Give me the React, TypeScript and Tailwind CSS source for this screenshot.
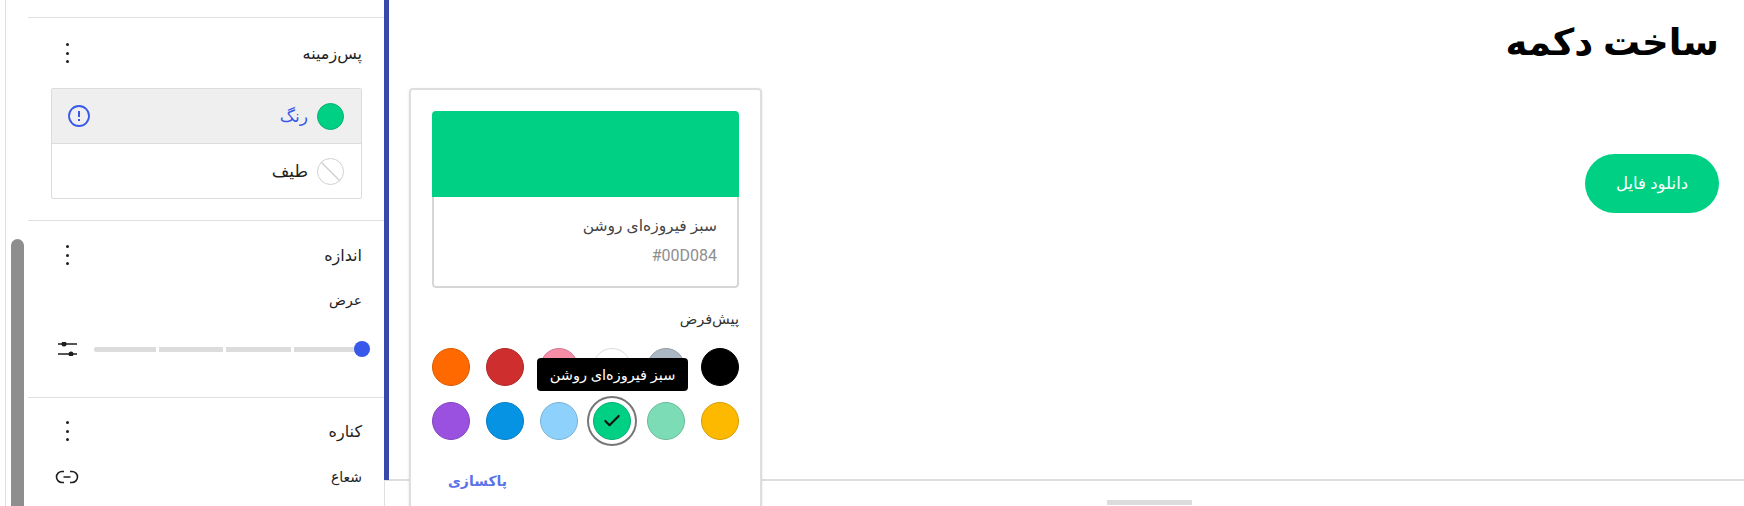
import { Check } from 'lucide-react';

const topColors = [
  { bg: 'bg-[#ff6900]', ring: 'border-[#d95a00]' },
  { bg: 'bg-[#cf2e2e]', ring: 'border-[#b02727]' },
  { bg: 'bg-[#f78da7]', ring: 'border-[#d2788e]' },
  { bg: 'bg-white', ring: 'border-[#dcdcdc]' },
  { bg: 'bg-[#abb8c3]', ring: 'border-[#919ca6]' },
  { bg: 'bg-black', ring: 'border-black' },
];

const bottomColors = [
  { bg: 'bg-[#9b51e0]', ring: 'border-[#8445be]' },
  { bg: 'bg-[#0693e3]', ring: 'border-[#057dc1]' },
  { bg: 'bg-[#8ed1fc]', ring: 'border-[#79b2d6]' },
  { bg: 'bg-[#00d084]', ring: 'border-[#00b170]', selected: true },
  { bg: 'bg-[#7bdcb5]', ring: 'border-[#69bb9a]' },
  { bg: 'bg-[#fcb900]', ring: 'border-[#d69d00]' },
];

function Kebab() {
  return (
    <div className="flex flex-col gap-[5.5px] w-[3px]">
      <span className="w-[3px] h-[3px] rounded-full bg-[#1e1e1e]"></span>
      <span className="w-[3px] h-[3px] rounded-full bg-[#1e1e1e]"></span>
      <span className="w-[3px] h-[3px] rounded-full bg-[#1e1e1e]"></span>
    </div>
  );
}

function SectionHeader({ title }: { title: string }) {
  return (
    <div className="flex items-center justify-between pl-[38px] pr-[22px] h-[24px]">
      <Kebab />
      <span className="text-[16px] leading-[24px] text-[#1e1e1e]" dir="rtl">{title}</span>
    </div>
  );
}

function Swatch({ bg, ring, selected }: { bg: string; ring: string; selected?: boolean }) {
  return (
    <div className="relative w-[38px] h-[38px]">
      <div className={`w-[38px] h-[38px] rounded-full border ${bg} ${ring} flex items-center justify-center`}>
        {selected && <Check size={20} strokeWidth={2.6} className="text-[#111]" />}
      </div>
      {selected && (
        <div className="absolute -inset-[6px] rounded-full border-[2.5px] border-[#777]"></div>
      )}
    </div>
  );
}

export default function App() {
  return (
    <div
      className="relative flex w-[1744px] h-[506px] overflow-hidden bg-white"
      style={{ fontFamily: '"Noto Sans", "Liberation Sans", "DejaVu Sans", sans-serif' }}
    >
      {/* scrollbar strip */}
      <div className="w-[28px] shrink-0 pl-[5px]">
        <div className="h-full border-l border-[#e0e0e0] pl-[5px] pt-[239px]">
          <div className="w-[13px] h-full bg-[#8e8e8e] rounded-t-[7px]"></div>
        </div>
      </div>

      {/* settings panel */}
      <div className="w-[357px] shrink-0 border-r border-[#e0e0e0] flex flex-col">
        <div className="h-[18px] shrink-0 border-b border-[#e0e0e0]"></div>

        <div className="h-[203px] shrink-0 border-b border-[#e0e0e0] pt-[23px]">
          <SectionHeader title="پس‌زمینه" />
          <div className="mt-[23px] ml-[23px] mr-[22px] border border-[#dcdcdc] rounded-[2px]">
            <div className="h-[55px] bg-[#efefef] border-b border-[#dcdcdc] flex items-center justify-between pl-[15px] pr-[17px]">
              <svg width="24" height="24" viewBox="0 0 24 24" fill="none">
                <circle cx="12" cy="12" r="10" stroke="#3858e9" strokeWidth="1.8" />
                <path d="M12 7v6" stroke="#3858e9" strokeWidth="2" />
                <path d="M12 15v2" stroke="#3858e9" strokeWidth="2" />
              </svg>
              <div className="flex items-center gap-[9px]" dir="rtl">
                <span className="w-[27px] h-[27px] rounded-full bg-[#00d084] border border-[#00b170]"></span>
                <span className="text-[17px] text-[#3858e9]">رنگ</span>
              </div>
            </div>
            <div className="h-[54px] flex items-center justify-end pr-[17px]">
              <div className="flex items-center gap-[9px]" dir="rtl">
                <svg width="27" height="27" viewBox="0 0 27 27" fill="none">
                  <circle cx="13.5" cy="13.5" r="13" stroke="#d0d0d0" />
                  <path d="M4.5 4.5l18 18" stroke="#d0d0d0" strokeWidth="1.5" />
                </svg>
                <span className="text-[17px] text-[#1e1e1e]">طیف</span>
              </div>
            </div>
          </div>
        </div>

        <div className="h-[177px] shrink-0 border-b border-[#e0e0e0] pt-[22px]">
          <SectionHeader title="اندازه" />
          <div className="mt-[23px] pr-[22px] text-right text-[14px] leading-[20px] text-[#1e1e1e]" dir="rtl">عرض</div>
          <div className="mt-[32px] flex items-center pl-[30px] pr-[14px]">
            <svg width="20" height="14" viewBox="0 0 20 14" fill="none" className="shrink-0">
              <path d="M0 2h19M0 12h19" stroke="#1e1e1e" strokeWidth="1.3" />
              <circle cx="6" cy="2" r="2.5" fill="#1e1e1e" />
              <circle cx="13" cy="12" r="2.5" fill="#1e1e1e" />
            </svg>
            <div className="relative ml-[16px] flex-1 flex gap-[3px] h-[5px]">
              <span className="w-[62px] bg-[#dcdcdc] rounded-l-[2px]"></span>
              <span className="w-[64px] bg-[#dcdcdc]"></span>
              <span className="w-[65px] bg-[#dcdcdc]"></span>
              <span className="flex-1 bg-[#dcdcdc]"></span>
              <span className="absolute right-0 -top-[6px] w-[16px] h-[16px] rounded-full bg-[#3858e9]"></span>
            </div>
          </div>
        </div>

        <div className="pt-[21px]">
          <SectionHeader title="کناره" />
          <div className="mt-[24px] flex items-center justify-between pl-[27px] pr-[22px]">
            <svg width="24" height="14" viewBox="0 0 24 14" fill="none">
              <path d="M9 1.5H7a5.5 5.5 0 0 0 0 11h2M15 1.5h2a5.5 5.5 0 0 1 0 11h-2M8.5 7h7" stroke="#1e1e1e" strokeWidth="1.6" />
            </svg>
            <span className="text-[14px] leading-[20px] text-[#1e1e1e]" dir="rtl">شعاع</span>
          </div>
        </div>
      </div>

      {/* blue resize bar */}
      <div className="absolute left-[384px] top-0 w-[5px] h-[480px] bg-[#3949ab]"></div>

      {/* main area */}
      <div className="flex-1 flex flex-col">
        <div className="h-[481px] border-b-2 border-[#dedede] flex flex-col items-end pr-[25px] pl-[10px]">
          <h1 className="mt-[16px] text-[37px] leading-[50px] font-bold text-black" dir="rtl">ساخت دکمه</h1>
          <button className="mt-[88px] w-[134px] h-[59px] rounded-full bg-[#00d084] text-white text-[16.5px]" dir="rtl">
            دانلود فایل
          </button>
        </div>
        <div className="flex-1 flex justify-center items-end pb-[1px] pl-[169px]">
          <div className="w-[85px] h-[5px] bg-[#dcdcdc]"></div>
        </div>
      </div>

      {/* color popover */}
      <div className="absolute left-[409px] top-[88px] w-[353px] h-[430px] bg-white border-2 border-[#dedede] rounded-[4px] px-[21px] pt-[21px] shadow-sm">
        <div className="w-[307px] h-[177px] rounded-[4px] overflow-hidden flex flex-col">
          <div className="h-[86px] shrink-0 bg-[#00d084]"></div>
          <div className="flex-1 border-x-2 border-b-2 border-[#d6d6d6] rounded-b-[4px] pr-[20px] pt-[16px] text-right" dir="rtl">
            <div className="text-[15.5px] leading-[24px] text-[#444]">سبز فیروزه‌ای روشن</div>
            <div className="mt-[7px] text-[16px] leading-[24px] text-[#8e8e8e] font-[Roboto]" dir="ltr">#00D084</div>
          </div>
        </div>

        <div className="mt-[18px] text-right text-[14.5px] leading-[24px] text-[#333]" dir="rtl">پیش‌فرض</div>

        <div className="relative mt-[18px] flex flex-col gap-[16px]">
          <div className="flex justify-between">
            {topColors.map((c, i) => (
              <Swatch key={i} bg={c.bg} ring={c.ring} />
            ))}
          </div>
          <div className="flex justify-between">
            {bottomColors.map((c, i) => (
              <Swatch key={i} bg={c.bg} ring={c.ring} selected={c.selected} />
            ))}
          </div>
          <div className="absolute left-[105px] top-[10px] w-[151px] h-[33px] rounded-[4px] bg-black text-white text-[14.5px] flex items-center justify-center" dir="rtl">
            سبز فیروزه‌ای روشن
          </div>
        </div>

        <div className="mt-[29px] pl-[16px] text-left text-[14px] leading-[24px] font-bold text-[#5b73e8]">
          <span dir="rtl">پاکسازی</span>
        </div>
      </div>
    </div>
  );
}
